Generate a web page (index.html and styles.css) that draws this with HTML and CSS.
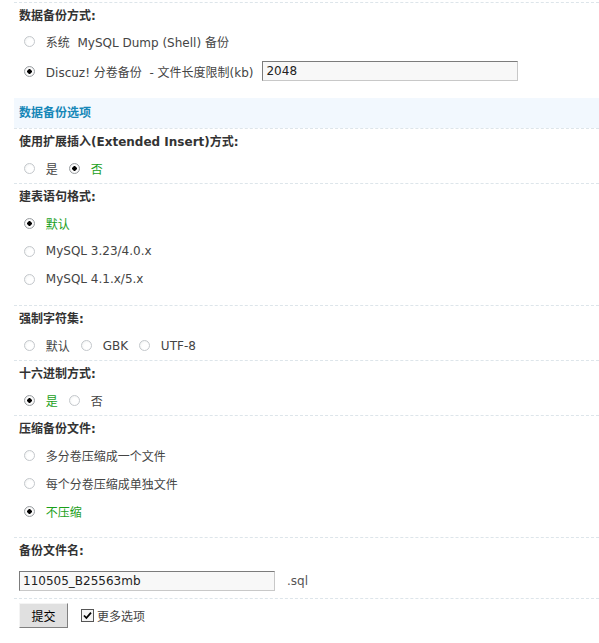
FILE: index.html
```html
<!DOCTYPE html>
<html lang="zh-CN">
<head>
    <meta charset="UTF-8">
    <title>数据备份</title>
    <link rel="stylesheet" href="styles.css">
</head>
<body>
    <form class="backup-form" onsubmit="return false;">
        <div class="section">
            <div class="section-title">数据备份方式:</div>
            <div class="options stacked wide">
                <label class="opt"><input type="radio" name="method"> 系统&nbsp; MySQL Dump (Shell) 备份</label>
                <label class="opt"><input type="radio" name="method" checked> Discuz! 分卷备份&nbsp; - 文件长度限制(kb)<input type="text" class="text-input size-input" value="2048"></label>
            </div>
        </div>

        <div class="band">数据备份选项</div>

        <div class="section">
            <div class="section-title">使用扩展插入(Extended Insert)方式:</div>
            <div class="options inline">
                <label class="opt"><input type="radio" name="extins"> 是</label>
                <label class="opt on"><input type="radio" name="extins" checked> 否</label>
            </div>
        </div>

        <div class="section">
            <div class="section-title">建表语句格式:</div>
            <div class="options stacked">
                <label class="opt on"><input type="radio" name="sqlcompat" checked> 默认</label>
                <label class="opt"><input type="radio" name="sqlcompat"> MySQL 3.23/4.0.x</label>
                <label class="opt"><input type="radio" name="sqlcompat"> MySQL 4.1.x/5.x</label>
            </div>
        </div>

        <div class="section">
            <div class="section-title">强制字符集:</div>
            <div class="options inline">
                <label class="opt"><input type="radio" name="charset"> 默认</label>
                <label class="opt"><input type="radio" name="charset"> GBK</label>
                <label class="opt"><input type="radio" name="charset"> UTF-8</label>
            </div>
        </div>

        <div class="section">
            <div class="section-title">十六进制方式:</div>
            <div class="options inline">
                <label class="opt on"><input type="radio" name="usehex" checked> 是</label>
                <label class="opt"><input type="radio" name="usehex"> 否</label>
            </div>
        </div>

        <div class="section">
            <div class="section-title">压缩备份文件:</div>
            <div class="options stacked">
                <label class="opt"><input type="radio" name="usezip"> 多分卷压缩成一个文件</label>
                <label class="opt"><input type="radio" name="usezip"> 每个分卷压缩成单独文件</label>
                <label class="opt on"><input type="radio" name="usezip" checked> 不压缩</label>
            </div>
        </div>

        <div class="section">
            <div class="section-title">备份文件名:</div>
            <div class="filename-row">
                <input type="text" class="text-input name-input" value="110505_B25563mb">
                <span class="ext">.sql</span>
            </div>
        </div>

        <div class="section submit-row">
            <button type="submit" class="btn">提交</button>
            <label class="more"><span class="checkbox"><svg width="9" height="9" viewBox="0 0 9 9"><path d="M1 4.5 L3.4 7 L8 1.6" fill="none" stroke="#000" stroke-width="1.8"/></svg></span>更多选项</label>
        </div>
    </form>
</body>
</html>
```

FILE: styles.css
```css
body {
    margin: 0;
    background: #fff;
    font-family: "DejaVu Sans", "Noto Sans CJK SC", sans-serif;
    font-size: 12px;
    color: #444;
}

.backup-form {
    margin-left: 14px;
    padding-top: 2px;
}

.section {
    border-top: 1px dashed #dde5ea;
}

.section-title {
    height: 25px;
    line-height: 26px;
    padding-left: 5px;
    font-weight: bold;
    color: #333;
}

.options {
    padding-left: 10px;
}

.options.stacked {
    display: flex;
    flex-direction: column;
    padding-bottom: 12px;
}

.options.stacked .opt {
    flex: 0 0 28px;
}

/* first block sits a bit higher and has taller rows */
.options.stacked.wide {
    margin-top: -2px;
    padding-bottom: 12px;
}

.options.stacked.wide .opt {
    flex-basis: 30px;
}

.options.inline {
    display: flex;
    gap: 11px;
    height: 29px;
}

.opt {
    display: flex;
    align-items: center;
    gap: 7px;
    white-space: pre;
    color: #444;
}

.opt.on {
    color: #1aa01a;
}

.opt input[type="radio"] {
    appearance: none;
    flex: none;
    width: 11px;
    height: 11px;
    margin: 0;
    border: 1px solid #c4c8cc;
    border-radius: 50%;
    background: radial-gradient(circle at 60% 60%, #fff 40%, #eceeee 100%);
}

.opt input[type="radio"]:checked {
    border-color: #9a9ea2;
    background: radial-gradient(circle, #000 0 2px, #fff 2.5px, #e8e8e8 100%);
}

.text-input {
    height: 20px;
    box-sizing: border-box;
    margin: 0;
    padding: 0 3px;
    border: 1px solid;
    border-color: #7c7c7c #c8c8c8 #c8c8c8 #7c7c7c;
    background: #f8f8f8;
    font-family: inherit;
    font-size: 12px;
    color: #222;
}

.size-input {
    width: 256px;
    margin-left: 2px;
}

.band {
    height: 30px;
    line-height: 30px;
    padding-left: 5px;
    background: #f2f8fe;
    color: #1687b8;
    font-weight: bold;
}

.filename-row {
    display: flex;
    align-items: center;
    height: 35px;
    padding-left: 5px;
}

.name-input {
    width: 256px;
}

.ext {
    margin-left: 12px;
    color: #555;
}

.submit-row {
    display: flex;
    align-items: center;
    gap: 13px;
    padding: 4px 0 16px 5px;
}

.btn {
    width: 49px;
    height: 25px;
    margin: 0;
    border: 1px solid;
    border-color: #f4f4f4 #808080 #808080 #f4f4f4;
    background: #e0e0e0;
    font-family: inherit;
    font-size: 12px;
    color: #000;
}

.more {
    display: flex;
    align-items: center;
    gap: 3px;
    color: #444;
}

.checkbox {
    display: inline-flex;
    align-items: center;
    justify-content: center;
    width: 11px;
    height: 11px;
    border: 1px solid #555;
    background: #f4f4f4;
}
```
